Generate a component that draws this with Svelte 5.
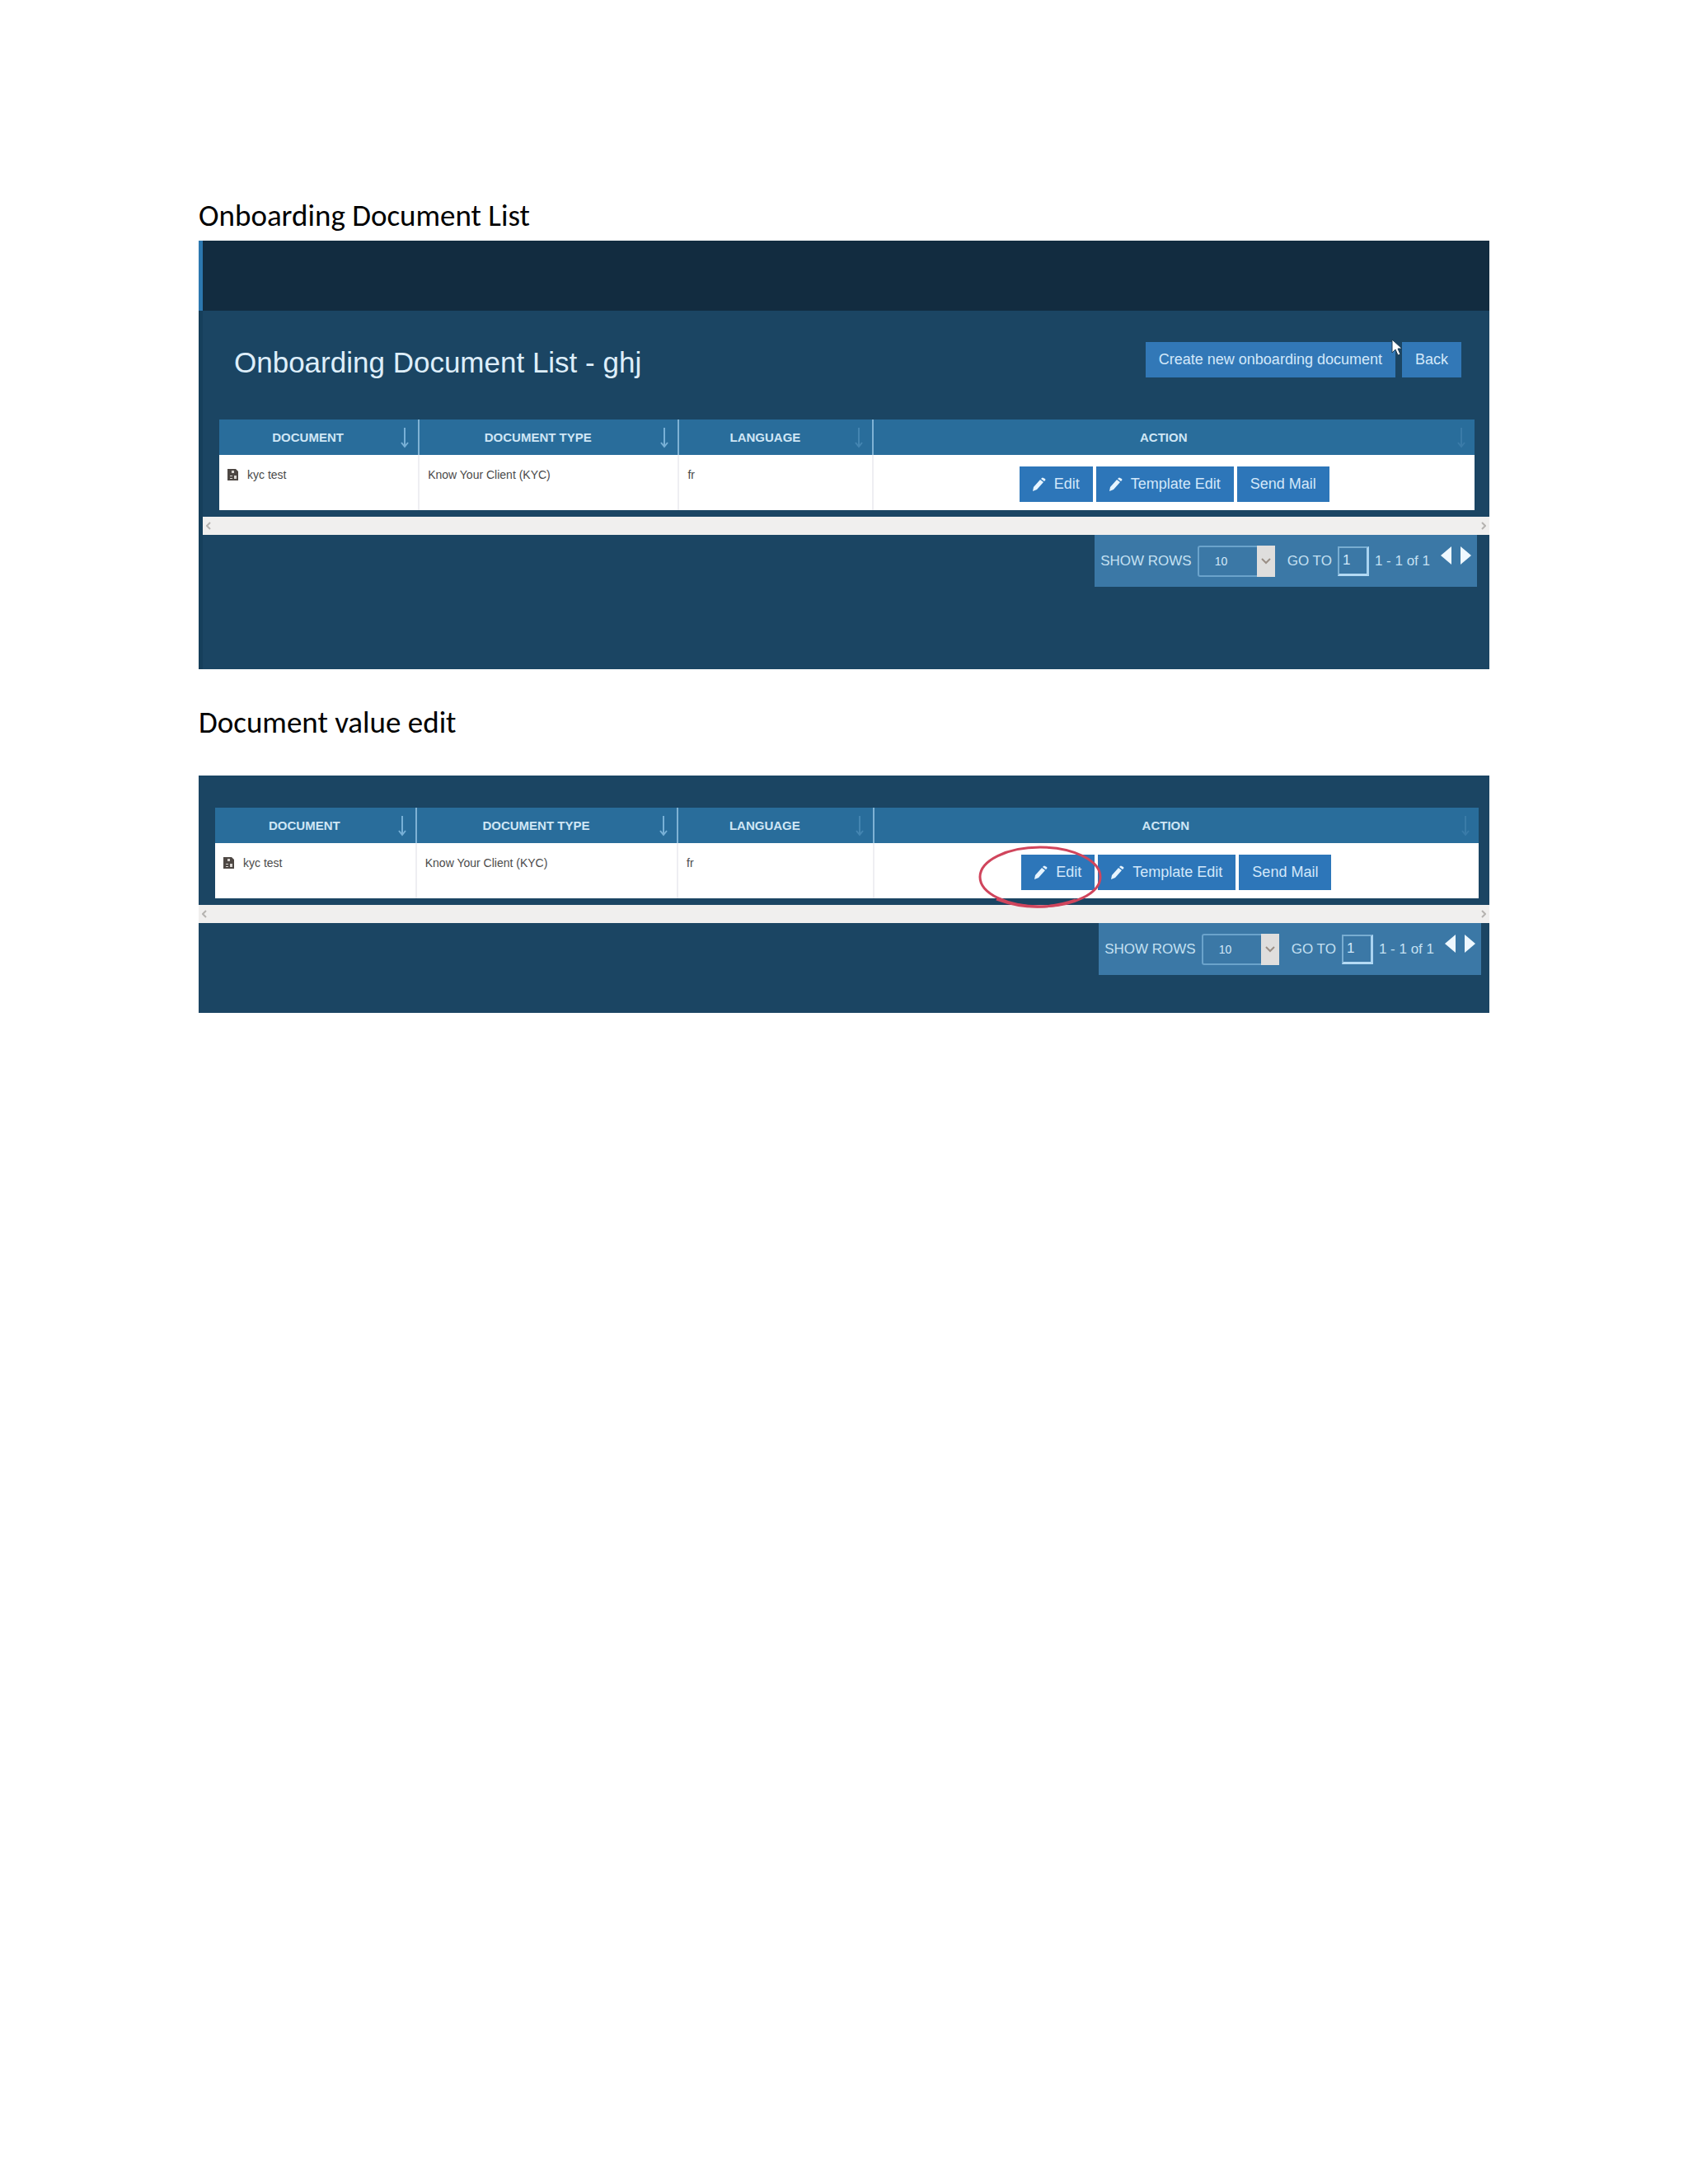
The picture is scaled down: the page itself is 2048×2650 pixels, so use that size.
<script>
	const columns = [
		{ name: 'Document', width: 15.9, sort: 'strong' },
		{ name: 'Document type', width: 20.7, sort: 'strong' },
		{ name: 'Language', width: 15.5, sort: 'weak' },
		{ name: 'Action', width: 47.9, sort: 'weakest' }
	];

	const documents = [{ name: 'kyc test', type: 'Know Your Client (KYC)', language: 'fr' }];
</script>

{#snippet pencil()}
	<svg class="pencil" viewBox="0 0 16 18" aria-hidden="true">
		<path d="M0 17l1-5L9 3l4 3-8 9z M10 2l1-1q1-1 2 0l2 1q1 1 0 2l-1 1z" />
	</svg>
{/snippet}

{#snippet documentTable(id, marked)}
	<div class="table-wrap">
		<table>
			<colgroup>
				{#each columns as column}
					<col style="width: {column.width}%" />
				{/each}
			</colgroup>
			<thead>
				<tr>
					{#each columns as column}
						<th scope="col">
							<div class="heading">
								<span>{column.name}</span>
								<svg class="sort {column.sort}" viewBox="0 0 12 26" aria-hidden="true">
									<path d="M6 1v22M2 19l4 5 4-5" />
								</svg>
							</div>
						</th>
					{/each}
				</tr>
			</thead>
			<tbody>
				{#each documents as doc}
					<tr>
						<td>
							<div class="name">
								<svg class="file" viewBox="0 0 13 14" aria-hidden="true">
									<path d="M0 0h10l3 3v11H0z" />
									<path class="cut" d="M5 2h3v3H5zM3 8h3v1H3zM3 11h3v1H3zM8 8h3v4H8z" />
								</svg>
								{doc.name}
							</div>
						</td>
						<td>{doc.type}</td>
						<td>{doc.language}</td>
						<td>
							<div class="actions">
								<div class="mark-holder">
									<button type="button">{@render pencil()}Edit</button>
									{#if marked}
										<svg class="mark" viewBox="0 0 152 80" aria-hidden="true">
											<ellipse cx="75" cy="39" rx="73" ry="36" />
											<path d="M22 66Q70 84 118 67" />
										</svg>
									{/if}
								</div>
								<button type="button">{@render pencil()}Template Edit</button>
								<button type="button">Send Mail</button>
							</div>
						</td>
					</tr>
				{/each}
			</tbody>
		</table>
	</div>

	<div class="scrollbar">
		<button type="button" aria-label="Scroll left">
			<svg viewBox="0 0 6 10"><path d="M5 1L1 5l4 4" /></svg>
		</button>
		<button type="button" aria-label="Scroll right">
			<svg viewBox="0 0 6 10"><path d="M1 1l4 4-4 4" /></svg>
		</button>
	</div>

	<div class="pagination">
		<label for="{id}-rows">SHOW ROWS</label>
		<div class="select">
			<select id="{id}-rows">
				<option>10</option>
				<option>20</option>
				<option>50</option>
			</select>
			<span class="chevron">
				<svg viewBox="0 0 12 8" aria-hidden="true"><path d="M1 1l5 5 5-5" /></svg>
			</span>
		</div>
		<label for="{id}-page">GO TO</label>
		<input id="{id}-page" type="text" value="1" />
		<span class="range">1 - 1 of 1</span>
		<div class="pager">
			<button type="button" aria-label="Previous page">
				<svg viewBox="0 0 13 22"><path d="M13 0v22L0 11z" /></svg>
			</button>
			<button type="button" aria-label="Next page">
				<svg viewBox="0 0 13 22"><path d="M0 0v22l13-11z" /></svg>
			</button>
		</div>
	</div>
{/snippet}

<main>
	<h2>Onboarding Document List</h2>
	<section class="screen list">
		<div class="topbar"></div>
		<div class="content">
			<header>
				<h1>Onboarding Document List - ghj</h1>
				<div class="header-buttons">
					<button type="button">Create new onboarding document</button>
					<button type="button">Back</button>
					<svg class="cursor" viewBox="0 0 14 21" aria-hidden="true">
						<path d="M1 1v16l4-4 3 7 3-1-3-7h5z" />
					</svg>
				</div>
			</header>
			{@render documentTable('list', false)}
		</div>
	</section>

	<h2 class="second">Document value edit</h2>
	<section class="screen edit">
		{@render documentTable('edit', true)}
	</section>
</main>

<style>
	:global(body) {
		margin: 0;
		background: #fff;
	}

	main {
		padding: 240px 241px;
		font-family: 'Liberation Sans', Arial, sans-serif;
	}

	h2 {
		margin: 0 0 8px;
		font-family: Carlito, Lato, sans-serif;
		font-size: 37px;
		font-weight: 400;
		line-height: 44px;
		color: #000;
	}

	h2.second {
		margin: 43px 0 42px;
	}

	button {
		font-family: inherit;
		border: 0;
		cursor: pointer;
	}

	.screen {
		--table-right: 18px;
		background: #1b4563;
	}

	.screen.edit {
		--table-right: 13px;
		padding: 39px 0 46px;
	}

	.topbar {
		height: 85px;
		background: #122c40;
		border-left: 5px solid #2c78b0;
	}

	.content {
		padding: 38px 0 100px;
		border-left: 5px solid #163f5b;
	}

	header {
		display: flex;
		justify-content: space-between;
		align-items: flex-start;
		margin-bottom: 45px;
		padding: 0 34px 0 38px;
	}

	h1 {
		margin: 0;
		font-size: 35px;
		font-weight: 400;
		line-height: 49px;
		color: #deeefa;
	}

	.header-buttons {
		display: flex;
		gap: 8px;
		position: relative;
	}

	.header-buttons button,
	.actions button {
		display: flex;
		align-items: center;
		height: 43px;
		padding: 0 16px;
		font-size: 18px;
		color: #d3e8fa;
		background: #3278b7;
		white-space: nowrap;
	}

	.cursor {
		position: absolute;
		top: -4px;
		right: 71px;
		width: 14px;
		height: 21px;
		fill: #fff;
		stroke: #1d3b52;
		stroke-width: 1;
	}

	.table-wrap {
		padding: 0 var(--table-right) 8px 20px;
	}

	table {
		width: 100%;
		border-collapse: collapse;
		table-layout: fixed;
		background: #fff;
	}

	th {
		height: 43px;
		padding: 0;
		background: #296d9b;
		border-right: 2px solid #7fb2d4;
		font-size: 15px;
		text-transform: uppercase;
		color: #cfe6f5;
	}

	th:last-child,
	td:last-child {
		border-right: 0;
	}

	.heading {
		display: flex;
		align-items: center;
		gap: 4px;
		padding-right: 10px;
	}

	.heading span {
		flex: 1;
	}

	.sort {
		width: 12px;
		height: 26px;
		fill: none;
		stroke: #78b0d6;
		stroke-width: 2;
	}

	.sort.weak {
		stroke: #4485b1;
	}

	.sort.weakest {
		stroke: #3a7ba8;
	}

	td {
		height: 43px;
		padding: 14px 10px 10px;
		border-right: 2px solid #eeeef2;
		font-size: 14px;
		line-height: 20px;
		vertical-align: top;
		color: #4a4a4a;
	}

	.name {
		display: flex;
		align-items: center;
		gap: 11px;
	}

	.file {
		width: 13px;
		height: 14px;
		fill: #4d4743;
	}

	.file .cut {
		fill: #d8d4d0;
	}

	.actions {
		display: flex;
		justify-content: center;
		gap: 4px;
	}

	.actions button {
		gap: 10px;
		background: #2d76b9;
	}

	.pencil {
		width: 16px;
		height: 18px;
		fill: #e6f4ff;
	}

	.mark-holder {
		position: relative;
	}

	.mark {
		position: absolute;
		top: -12px;
		left: -52px;
		width: 152px;
		height: 80px;
		fill: none;
		stroke: #d0455c;
		stroke-width: 3;
		pointer-events: none;
	}

	.scrollbar {
		display: flex;
		justify-content: space-between;
		align-items: center;
		height: 22px;
		background: #f0efee;
	}

	.scrollbar button {
		display: flex;
		padding: 4px;
		background: none;
	}

	.scrollbar svg {
		width: 6px;
		height: 10px;
		fill: none;
		stroke: #b5b3b0;
		stroke-width: 2;
	}

	.pagination {
		display: flex;
		align-items: center;
		width: fit-content;
		height: 63px;
		margin-left: auto;
		margin-right: calc(var(--table-right) - 3px);
		padding: 0 7px;
		box-sizing: border-box;
		background: #3b78a6;
		font-size: 17px;
		color: #c4e0f2;
		white-space: nowrap;
	}

	.select {
		position: relative;
		margin: 0 15px 0 7px;
	}

	select {
		appearance: none;
		display: block;
		width: 94px;
		height: 38px;
		padding: 0 24px 0 19px;
		border: 2px solid #6ba3cb;
		border-radius: 3px;
		background: #3b78a6;
		font: 14px 'Liberation Sans', Arial, sans-serif;
		color: #d3e8fa;
	}

	.chevron {
		position: absolute;
		top: 0;
		right: 0;
		display: flex;
		align-items: center;
		justify-content: center;
		width: 22px;
		height: 38px;
		background: #dfdedd;
		pointer-events: none;
	}

	.chevron svg {
		width: 12px;
		height: 8px;
		fill: none;
		stroke: #9b8f86;
		stroke-width: 2;
	}

	input {
		width: 38px;
		height: 36px;
		margin: 0 7px;
		padding: 0 4px;
		box-sizing: border-box;
		border: 2px solid #79add1;
		border-right: 3px solid #a9d3f0;
		border-bottom: 3px solid #b4daf4;
		background: none;
		font: 17px 'Liberation Sans', Arial, sans-serif;
		color: #d3e8fa;
	}

	.pager {
		display: flex;
		gap: 11px;
		margin: 0 0 14px 13px;
	}

	.pager button {
		display: flex;
		padding: 0;
		background: none;
	}

	.pager svg {
		width: 13px;
		height: 22px;
		fill: #eef8ff;
	}
</style>
